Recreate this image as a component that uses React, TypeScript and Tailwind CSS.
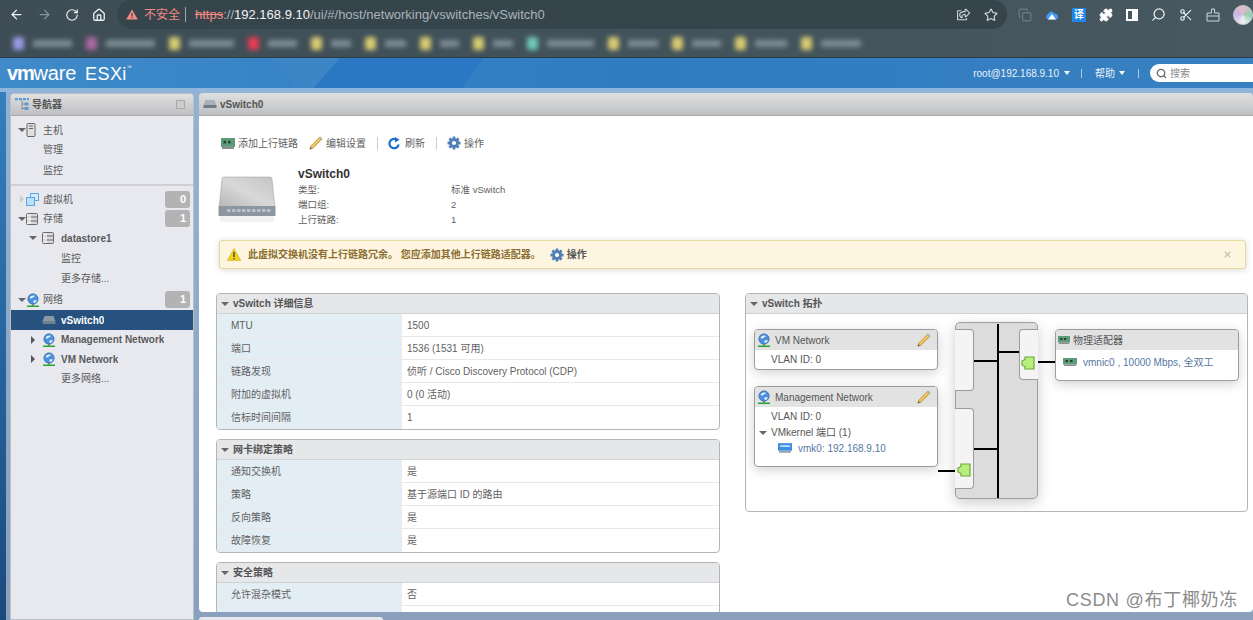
import React from 'react';
import { ArrowLeft, ArrowRight, RotateCw, Home, Star, Puzzle, Search, Scissors, X, Copy } from 'lucide-react';
import { FaRegShareSquare } from 'react-icons/fa';

const font = 'font-["Liberation_Sans","Noto_Sans_CJK_SC",sans-serif]';

function Tri({ open = true, light = false }: { open?: boolean; light?: boolean }) {
  return open ? (
    <span className="w-0 h-0 border-x-[4px] border-x-transparent border-t-[4px] border-t-[#666] inline-block shrink-0" />
  ) : (
    <span className={`w-0 h-0 border-y-[4px] border-y-transparent border-l-[4px] inline-block shrink-0 ${light ? 'border-l-[#ccc]' : 'border-l-[#555]'}`} />
  );
}

function Globe({ size = 14 }: { size?: number }) {
  return (
    <svg width={size} height={size} viewBox="0 0 14 14" className="shrink-0">
      <circle cx="7" cy="6" r="5.2" fill="#4a90dc" stroke="#2a62a8" strokeWidth="0.6" />
      <path d="M3.5 4.5c1.5-2 4-2.6 5.5-1.6-.6 1-1.8.8-2.5 1.8-.5 1-2 1.4-3-.2z" fill="#e4f0fb" />
      <path d="M7.5 7.5c1.2-.5 2.6-.4 3.4.1-.4 1.5-1.6 2.5-2.8 2.6-.6-.8-.9-1.8-.6-2.7z" fill="#dbe9f8" />
      <rect x="6" y="11" width="2" height="1.5" fill="#777" />
      <rect x="1" y="12.5" width="12" height="1.5" fill="#25a52a" />
    </svg>
  );
}

function SwitchIcon({ light = false }: { light?: boolean }) {
  return (
    <svg width="14" height="10" viewBox="0 0 14 10" className="shrink-0">
      <path d="M2.5 1h9L13.5 6.5H.5z" fill={light ? '#8d99a8' : '#a9b0b8'} />
      <rect x="0.5" y="6" width="13" height="3" fill={light ? '#6f7f92' : '#6d7a88'} />
    </svg>
  );
}

function StoreIcon() {
  return (
    <svg width="12" height="12" viewBox="0 0 12 12" className="shrink-0">
      <rect x="0.5" y="0.5" width="11" height="11" rx="1" fill="#d9d9d9" stroke="#6b6b6b" />
      <path d="M1 4h10M1 8h10" stroke="#6b6b6b" />
      <rect x="1" y="1" width="4" height="10" fill="#f4f4f4" opacity="0.7" />
    </svg>
  );
}

function Pencil() {
  return (
    <svg width="14" height="14" viewBox="0 0 14 14" className="shrink-0">
      <path d="M11 .8l2.200 2.200L4 12.200.8 13.200l1-3.200z" fill="#e6b54a" stroke="#a5802c" strokeWidth="0.5" />
      <path d="M3 10.500L11.600 2" stroke="#f6dc94" strokeWidth="1" />
      <path d="M11 .8l2.200 2.200-1.300 1.300-2.200-2.200z" fill="#b8b0a0" />
      <path d="M.8 13.200l.6-2 1.400 1.400z" fill="#444" />
    </svg>
  );
}

function Nic({ w = 14, h = 8 }: { w?: number; h?: number }) {
  return (
    <svg width={w} height={h} viewBox="0 0 14 8" preserveAspectRatio="none" className="shrink-0">
      <rect x="0" y="0" width="14" height="6.5" fill="#5e9c79" />
      <rect x="2.5" y="2" width="2.5" height="2" fill="#26452f" />
      <rect x="7" y="2" width="2.5" height="2" fill="#26452f" />
      <rect x="1" y="6.5" width="12" height="1.5" fill="#8c8c8c" />
    </svg>
  );
}

function Gear({ size = 14 }: { size?: number }) {
  return (
    <svg width={size} height={size} viewBox="0 0 14 14" className="shrink-0">
      <g fill="#4f7fb8">
        <circle cx="7" cy="7" r="4.8" />
        <rect x="5.6" y="0.5" width="2.8" height="13" rx="0.5" />
        <rect x="0.5" y="5.6" width="13" height="2.8" rx="0.5" />
        <rect x="5.6" y="0.5" width="2.8" height="13" rx="0.5" transform="rotate(45 7 7)" />
        <rect x="5.6" y="0.5" width="2.8" height="13" rx="0.5" transform="rotate(-45 7 7)" />
      </g>
      <circle cx="7" cy="7" r="2.1" fill="#fff" />
    </svg>
  );
}

function Port() {
  return (
    <svg width="14" height="14" viewBox="0 0 14 14">
      <path d="M4 1h9v12H4v-2.500L1 9V5l3-1.500z" fill="#b9ee7c" stroke="#6da63c" strokeWidth="1.2" />
    </svg>
  );
}

function Badge({ n }: { n: number }) {
  return <span className="ml-auto mr-[3px] w-[25px] h-[17px] rounded-[3px] bg-[#b3b3b3] text-white text-[11px] font-bold flex items-center justify-end pr-[4px]">{n}</span>;
}

function NavRow({ top, h = 'h-[20px]', tri, icon, label, bold, badge, active, triLight }: {
  top?: boolean; h?: string; tri?: 'open' | 'closed'; icon?: React.ReactNode; label: string; bold?: boolean; badge?: number; active?: boolean; triLight?: boolean;
}) {
  return (
    <div className={`${h} flex items-center ${top ? 'pl-[5px]' : 'pl-[16px]'} ${active ? 'bg-[#27527f] text-white' : 'text-[#5a5a5a]'} text-[10px] ${bold ? 'font-bold' : ''}`}>
      <span className="w-[11px] flex items-center justify-center shrink-0">
        {tri && <Tri open={tri === 'open'} light={triLight} />}
      </span>
      {icon && <span className={`flex items-center shrink-0 ${top ? 'w-[16px] ml-[-1px] mr-[1px]' : 'w-[23px] pl-[4px]'}`}>{icon}</span>}
      <span className="truncate">{label}</span>
      {badge !== undefined && <Badge n={badge} />}
    </div>
  );
}

function InfoTable({ title, rows }: { title: string; rows: [string, string][] }) {
  return (
    <div className="border border-[#b5b5b5] rounded-[4px] overflow-hidden shrink-0 mb-[9px]">
      <div className="h-[20px] bg-[#e6e7e9] border-b border-[#cfd1d3] flex items-center pl-[4px] gap-[4px] text-[10px] font-bold text-[#555]">
        <Tri />
        {title}
      </div>
      {rows.map(([k, v], i) => (
        <div key={i} className={`flex h-[23px] text-[10px] text-[#5f5f5f] ${i < rows.length - 1 ? 'border-b border-[#e8e8e8]' : ''}`}>
          <div className="w-[185px] bg-[#e3edf4] pl-[14px] flex items-center shrink-0">{k}</div>
          <div className="pl-[5px] flex items-center">{v}</div>
        </div>
      ))}
    </div>
  );
}

function TopoCard({ className, title, icon, edit, children }: { className: string; title: string; icon: React.ReactNode; edit?: boolean; children: React.ReactNode }) {
  return (
    <div className={`absolute bg-white border border-[#9c9c9c] rounded-[4px] shadow-[0_3px_12px_rgba(0,0,0,0.18)] overflow-hidden ${className}`}>
      <div className="h-[20px] bg-[#e2e2e2] flex items-center pl-[2px] pr-[6px] text-[10px] text-[#555]">
        {icon}
        <span>{title}</span>
        {edit && <span className="ml-auto"><Pencil /></span>}
      </div>
      {children}
    </div>
  );
}

const bookmarks = [
  ['#9a9ae4', 39], ['#a868a0', 49], ['#d9cc72', 45], ['#e83c54', 29], ['#d9cc72', 20], ['#d9cc72', 21], ['#d9cc72', 19], ['#d9cc72', 20], ['#6fcab8', 47], ['#d9cc72', 30], ['#d9cc72', 29], ['#d9cc72', 32], ['#d9cc72', 40],
] as [string, number][];

export default function App() {
  return (
    <div className={`w-[1253px] h-[620px] overflow-hidden relative flex flex-col ${font} bg-[#3a83c2]`}>
      {/* browser toolbar */}
      <div className="h-[29px] bg-gradient-to-r from-[#3e4d55] to-[#475860] flex items-center shrink-0 text-white">
        <div className="flex items-center gap-[13px] pl-[9px] w-[117px] shrink-0">
          <ArrowLeft size={15} strokeWidth={2} className="text-[#eef2f4]" />
          <ArrowRight size={15} strokeWidth={2} className="text-[#84929a]" />
          <RotateCw size={14} strokeWidth={2} className="text-[#eef2f4]" />
          <Home size={14} strokeWidth={2.2} className="text-[#eef2f4]" />
        </div>
        <div className="w-[895px] h-[29px] rounded-full bg-[#36444c] flex items-center pl-[9px] pr-[9px] text-[13px]">
          <svg width="12" height="11" viewBox="0 0 12 11"><path d="M6 .5L11.8 10.5H.2z" fill="#f28b82" /><rect x="5.4" y="3.8" width="1.2" height="3.6" fill="#36444c" /><rect x="5.400" y="8" width="1.2" height="1.2" fill="#36444c" /></svg>
          <span className="text-[#f28b82] text-[12px] ml-[6px]">不安全</span>
          <span className="w-px h-[15px] bg-[#9aa5ab] ml-[5px] mr-[9px]" />
          <span className="text-[#f28b82] line-through">https</span>
          <span className="text-[#aab4ba]">://</span>
          <span className="text-[#f1f3f4]">192.168.9.10</span>
          <span className="text-[#aab4ba]">/ui/#/host/networking/vswitches/vSwitch0</span>
          <span className="ml-auto flex items-center gap-[14px] text-[#cfd6da]">
            <FaRegShareSquare size={13} />
            <Star size={14} />
          </span>
        </div>
        <div className="flex items-center gap-[13px] pl-[11px] text-[#eef2f4]">
          <Copy size={14} className="text-[#6f7b82]" />
          <svg width="14" height="10" viewBox="0 0 14 10"><path d="M3 9.5a3 3 0 0 1 .2-5.600C4 1.500 7.500 0 9 3.500c2.500-.5 4.500 1.500 4 4-.3 1.300-1 2-2.500 2z" fill="#3f9bf5" /><path d="M3 9.500L7 4l4 5.500z" fill="#fff" /></svg>
          <span className="w-[14px] h-[14px] bg-[#1d86e8] text-white text-[10px] leading-[14px] text-center font-bold">译</span>
          <Puzzle size={14} fill="#fff" />
          <span className="w-[12px] h-[12px] border-2 border-white flex justify-end"><span className="w-[4px] bg-white" /></span>
          <Search size={15} className="-scale-x-100" />
          <Scissors size={14} />
          <svg width="14" height="14" viewBox="0 0 14 14" fill="none" stroke="#cfd6da"><path d="M5.500 1h3v4h4.500v8H1V5h4.500z" /><path d="M1 8h12" /></svg>
          <span className="w-[20px] h-[20px] rounded-full shrink-0 bg-[conic-gradient(#e7b7c9,#8fd0b4,#f0f0f0,#c9b6e8,#e7b7c9)] border border-[#c9ced1]" />
        </div>
      </div>

      {/* bookmarks, blurred in the picture */}
      <div className="h-[29px] bg-gradient-to-r from-[#3e4d55] to-[#475860] border-b border-[#2f3a40] shrink-0 overflow-hidden flex items-center pl-[13px] gap-[14px]">
        {bookmarks.map(([c, w], i) => (
          <div key={i} className="flex items-center gap-[9px] blur-[2.5px] shrink-0">
            <span className="w-[11px] h-[13px] rounded-[2px] shrink-0" style={{ backgroundColor: c }} />
            <span className="h-[7px] bg-[#7f8d95] shrink-0" style={{ width: w }} />
          </div>
        ))}
      </div>

      {/* esxi header */}
      <div className="h-[30px] shrink-0 flex items-center pl-[7px] bg-gradient-to-r from-[#3f8ac8] via-[#2f7cc3] via-50% to-[#3880c0] text-white relative overflow-hidden">
        <svg width="500" height="30" viewBox="0 0 500 30" className="absolute left-0 top-0">
          <polygon points="272,0 340,0 314,30 296,30" fill="#3c86c6" />
          <polygon points="340,0 484,0 462,30 314,30" fill="#2a78c4" />
        </svg>
        <div className="flex items-baseline relative">
          <span className="text-[20px] leading-[24px] font-bold tracking-[-1.2px]">vm</span>
          <span className="text-[20px] leading-[24px] tracking-[-0.2px]">ware</span>
          <span className="text-[18px] leading-[24px] ml-[9px] tracking-[0.4px]">ESXi</span>
          <span className="text-[5px] self-start mt-[3px]">™</span>
        </div>
        <div className="ml-auto flex items-center text-[10px] text-[#eaf2fa] relative">
          <span>root@192.168.9.10</span>
          <span className="ml-[5px] w-0 h-0 border-x-[3.5px] border-x-transparent border-t-[4px] border-t-white" />
          <span className="w-px h-[9px] bg-[#a9cbe8] ml-[11px] mr-[13px]" />
          <span>帮助</span>
          <span className="ml-[4px] w-0 h-0 border-x-[3.5px] border-x-transparent border-t-[4px] border-t-white" />
          <span className="w-px h-[9px] bg-[#a9cbe8] ml-[13px] mr-[11px]" />
          <div className="w-[103px] h-[18px] bg-white rounded-l-full flex items-center pl-[6px] gap-[3px] text-[#888]">
            <Search size={11} strokeWidth={3} className="text-[#666]" />
            搜索
          </div>
        </div>
      </div>

      {/* workspace */}
      <div className="flex-1 min-h-0 flex flex-col">
        <div className="h-[4px] shrink-0 bg-[#8fb5da]" />
        <div className="flex-1 min-h-0 flex bg-gradient-to-b from-[#93b3d4] to-[#8aa0bc]">
          <div className="w-[6px] shrink-0 bg-gradient-to-b from-[#347fbe] to-[#1a4a7c]" />
          <div className="w-[4px] shrink-0" />
          {/* navigator */}
          <div className="w-[184px] shrink-0 bg-[#e8e9ef] flex flex-col border border-[#b9c0c8] rounded-t-[4px] mt-[1px]">
            <div className="h-[22px] shrink-0 bg-gradient-to-b from-[#e0e0e0] to-[#bfc0c3] border-b border-[#a9a9a9] flex items-center pl-[4px] pr-[8px] text-[10px] font-bold text-[#555] gap-[3px] rounded-t-[4px]">
              <svg width="14" height="13" viewBox="0 0 14 13" className="shrink-0">
                <path d="M0 1.200h14" stroke="#5b9bd5" strokeWidth="2.2" strokeDasharray="3 1" />
                <path d="M7 2.500v9M7 6h3M7 10.500h3" stroke="#888" />
                <rect x="9.500" y="4.500" width="4" height="3" fill="#5b9bd5" />
                <rect x="9.500" y="9" width="4" height="3" fill="#5b9bd5" />
              </svg>
              导航器
              <span className="ml-auto w-[9px] h-[9px] border border-[#aaa] bg-[#ccc]" />
            </div>
            <div className="pt-[4px] pb-[3px] border-b-2 border-[#d0d0d4] flex flex-col">
              <NavRow top tri="open" icon={<svg width="10" height="14" viewBox="0 0 10 14"><rect x="1" y="0.5" width="8" height="13" rx="1" fill="#e0e0e0" stroke="#666" /><rect x="3" y="2.5" width="4" height="1" fill="#666" /><rect x="3" y="5" width="4" height="1" fill="#666" /></svg>} label="主机" />
              <div className="h-[19px] flex items-center pl-[32px] text-[10px] text-[#5a5a5a]">管理</div>
              <div className="h-[22px] flex items-center pl-[32px] text-[10px] text-[#5a5a5a]">监控</div>
            </div>
            <div className="pt-[3px] flex flex-col">
              <NavRow top tri="closed" triLight icon={<svg width="13" height="13" viewBox="0 0 13 13"><rect x="4.5" y="0.5" width="8" height="7" fill="#d7ecfb" stroke="#58a7e6" /><rect x="0.5" y="4.5" width="8" height="8" fill="#bcdff8" stroke="#58a7e6" /></svg>} label="虚拟机" badge={0} />
              <NavRow top h="h-[19px]" tri="open" icon={<StoreIcon />} label="存储" badge={1} />
              <NavRow tri="open" icon={<StoreIcon />} label="datastore1" bold />
              <div className="h-[20px] flex items-center pl-[50px] text-[10px] text-[#5a5a5a]">监控</div>
              <div className="h-[21px] flex items-center pl-[50px] text-[10px] text-[#5a5a5a]">更多存储...</div>
              <NavRow top h="h-[21px]" tri="open" icon={<Globe />} label="网络" badge={1} />
              <NavRow icon={<SwitchIcon light />} label="vSwitch0" bold active />
              <NavRow h="h-[19px]" tri="closed" icon={<Globe />} label="Management Network" bold />
              <NavRow tri="closed" icon={<Globe />} label="VM Network" bold />
              <div className="h-[19px] flex items-center pl-[50px] text-[10px] text-[#5a5a5a]">更多网络...</div>
            </div>
          </div>

          <div className="w-[5px] shrink-0" />

          {/* main panel */}
          <div className="flex-1 min-w-0 flex flex-col mt-[1px] relative">
            <div className="h-[23px] shrink-0 bg-gradient-to-b from-[#e0e0e0] to-[#bfc0c3] border-b border-[#a9a9a9] rounded-t-[4px] flex items-center pl-[4px] gap-[3px] text-[10px] font-bold text-[#555]">
              <SwitchIcon />
              vSwitch0
            </div>
            <div className="h-[496px] shrink-0 bg-white rounded-b-[4px] overflow-hidden pl-[17px] pr-[5px] flex flex-col">
              {/* action bar */}
              <div className="h-[20px] mt-[17px] shrink-0 flex items-center text-[10px] text-[#5f5f5f] pl-[5px]">
                <Nic w={14} h={11} />
                <span className="ml-[3px]">添加上行链路</span>
                <span className="ml-[11px]"><Pencil /></span>
                <span className="ml-[3px]">编辑设置</span>
                <span className="w-px h-[13px] bg-[#ccc] ml-[11px] mr-[10px]" />
                <svg width="13" height="13" viewBox="0 0 14 14" fill="none" className="shrink-0"><path d="M11.5 8A5 5 0 1 1 8 2.300" stroke="#1f6fd0" strokeWidth="2.4" /><path d="M7.500 0v6l5-3z" fill="#1f6fd0" /></svg>
                <span className="ml-[4px]">刷新</span>
                <span className="w-px h-[13px] bg-[#ccc] ml-[11px] mr-[10px]" />
                <Gear />
                <span className="ml-[3px]">操作</span>
              </div>
              {/* summary */}
              <div className="h-[60px] mt-[11px] shrink-0 flex pl-[2px]">
                <svg width="58" height="50" viewBox="0 0 58 50" className="shrink-0 mt-[12px]">
                  <defs>
                    <linearGradient id="sw" x1="0" y1="1" x2="1" y2="0"><stop offset="0" stopColor="#b5b5b5" /><stop offset="0.5" stopColor="#d8d8d8" /><stop offset="1" stopColor="#c4c4c4" /></linearGradient>
                  </defs>
                  <path d="M6 1h46q2 0 2 2l3 29H1L4 3q0-2 2-2z" fill="url(#sw)" stroke="#9a9a9a" strokeWidth="0.5" />
                  <rect x="0.5" y="30" width="57" height="10" rx="1" fill="#8b96a0" />
                  {[0, 1, 2, 3, 4, 5, 6, 7, 8].map(i => <rect key={i} x={9 + i * 5} y="33" width="3.5" height="3" fill="#b8c1c9" />)}
                  <rect x="2" y="40" width="54" height="6" fill="#e9ecef" opacity="0.7" />
                </svg>
                <div className="ml-[22px] flex-1 text-[#5f5f5f] text-[9.5px]">
                  <div className="text-[12px] font-bold text-[#333] h-[18px] leading-[18px] mt-[1px]">vSwitch0</div>
                  <div className="flex h-[15px] items-center"><span className="w-[153px]">类型:</span>标准 vSwitch</div>
                  <div className="flex h-[15px] items-center"><span className="w-[153px]">端口组:</span>2</div>
                  <div className="flex h-[15px] items-center"><span className="w-[153px]">上行链路:</span>1</div>
                </div>
              </div>
              {/* warning */}
              <div className="h-[29px] mt-[16px] ml-[3px] mr-[2px] shrink-0 bg-[#fdf5e0] border border-[#e6d9a0] rounded-[3px] shadow-[0_1px_6px_rgba(0,0,0,0.15)] flex items-center pl-[7px] pr-[13px] text-[10px] text-[#8a6d2f] font-bold">
                <svg width="14" height="13" viewBox="0 0 14 13" className="shrink-0"><path d="M7 .5L13.8 12.500H.2z" fill="#f0d21c" stroke="#c9a90e" strokeWidth="0.5" /><rect x="6.3" y="4" width="1.4" height="5" fill="#444" /><rect x="6.3" y="10" width="1.4" height="1.4" fill="#444" /></svg>
                <span className="ml-[7px]">此虚拟交换机没有上行链路冗余。 您应添加其他上行链路适配器。</span>
                <span className="ml-[9px]"><Gear /></span>
                <span className="ml-[3px] text-[#555]">操作</span>
                <X size={9} strokeWidth={3.5} className="ml-auto text-[#cbc4a6]" />
              </div>
              {/* two columns */}
              <div className="flex mt-[24px] gap-[25px] min-h-0">
                <div className="w-[504px] shrink-0 flex flex-col">
                  <InfoTable title="vSwitch 详细信息" rows={[['MTU', '1500'], ['端口', '1536 (1531 可用)'], ['链路发现', '侦听 / Cisco Discovery Protocol (CDP)'], ['附加的虚拟机', '0 (0 活动)'], ['信标时间间隔', '1']]} />
                  <InfoTable title="网卡绑定策略" rows={[['通知交换机', '是'], ['策略', '基于源端口 ID 的路由'], ['反向策略', '是'], ['故障恢复', '是']]} />
                  <InfoTable title="安全策略" rows={[['允许混杂模式', '否'], ['', '']]} />
                </div>
                <div className="w-[503px] h-[219px] shrink-0 border border-[#b5b5b5] rounded-[4px] overflow-hidden relative">
                  <div className="h-[20px] bg-[#e6e7e9] border-b border-[#cfd1d3] flex items-center pl-[4px] gap-[4px] text-[10px] font-bold text-[#555]">
                    <Tri />
                    vSwitch 拓扑
                  </div>
                  {/* switch */}
                  <div className="absolute left-[209px] top-[28px] w-[83px] h-[177px] bg-[#dcdcdc] border border-[#9c9c9c] rounded-[5px] shadow-[0_4px_14px_rgba(0,0,0,0.2)]" />
                  <div className="absolute left-[209px] top-[35px] w-[19px] h-[62px] bg-[#f4f4f4] border border-[#9c9c9c] border-l-0 rounded-r-[4px]" />
                  <div className="absolute left-[209px] top-[114px] w-[19px] h-[81px] bg-[#f4f4f4] border border-[#9c9c9c] border-l-0 rounded-r-[4px]" />
                  <div className="absolute left-[273px] top-[35px] w-[19px] h-[51px] bg-[#f4f4f4] border border-[#9c9c9c] border-r-0 rounded-l-[4px]" />
                  <div className="absolute left-[251px] top-[30px] w-[2px] h-[174px] bg-black" />
                  <div className="absolute left-[228px] top-[66px] w-[24px] h-[2px] bg-black" />
                  <div className="absolute left-[228px] top-[154px] w-[24px] h-[2px] bg-black" />
                  <div className="absolute left-[252px] top-[57px] w-[21px] h-[2px] bg-black" />
                  <div className="absolute left-[292px] top-[67px] w-[17px] h-[2px] bg-black" />
                  <div className="absolute left-[192px] top-[176px] w-[17px] h-[2px] bg-black" />
                  <div className="absolute left-[275px] top-[62px]"><Port /></div>
                  <div className="absolute left-[211px] top-[169px]"><Port /></div>

                  <TopoCard className="left-[8px] top-[35px] w-[184px] h-[41px]" title="VM Network" icon={<span className="mr-[4px]"><Globe /></span>} edit>
                    <div className="pl-[16px] h-[19px] flex items-center text-[10px] text-[#555]">VLAN ID: 0</div>
                  </TopoCard>
                  <TopoCard className="left-[8px] top-[92px] w-[184px] h-[81px]" title="Management Network" icon={<span className="mr-[4px]"><Globe /></span>} edit>
                    <div className="pl-[16px] h-[19px] flex items-center text-[10px] text-[#555]">VLAN ID: 0</div>
                    <div className="pl-[4px] h-[13px] flex items-center gap-[4px] text-[10px] text-[#555]"><Tri />VMkernel 端口 (1)</div>
                    <div className="pl-[23px] h-[18px] flex items-center gap-[6px] text-[10px] text-[#5577a3]">
                      <svg width="14" height="10" viewBox="0 0 13 9"><rect width="13" height="7" fill="#3d8fe0" /><rect x="2" y="2" width="9" height="1.5" fill="#cfe6fb" /><rect x="1" y="7" width="11" height="2" fill="#9aa6b2" /></svg>
                      vmk0: 192.168.9.10
                    </div>
                  </TopoCard>
                  <TopoCard className="left-[309px] top-[35px] w-[184px] h-[52px]" title="物理适配器" icon={<span className="mr-[3px]"><Nic w={12} /></span>}>
                    <div className="pl-[7px] h-[24px] flex items-center gap-[6px] text-[10px] text-[#5577a3]">
                      <Nic />
                      vmnic0 , 10000 Mbps, 全双工
                    </div>
                  </TopoCard>
                </div>
              </div>
            </div>
            {/* tab strip cut off by the window */}
            <div className="h-[3px] mt-[5px] w-[184px] bg-[#e8e9ef] rounded-t-[3px]" />
          </div>
        </div>
      </div>

      <div className="absolute left-[1066px] top-[589px] text-[18px] leading-[22px] text-[#8c8c8c] tracking-[0.7px]">CSDN @布丁椰奶冻</div>
    </div>
  );
}
